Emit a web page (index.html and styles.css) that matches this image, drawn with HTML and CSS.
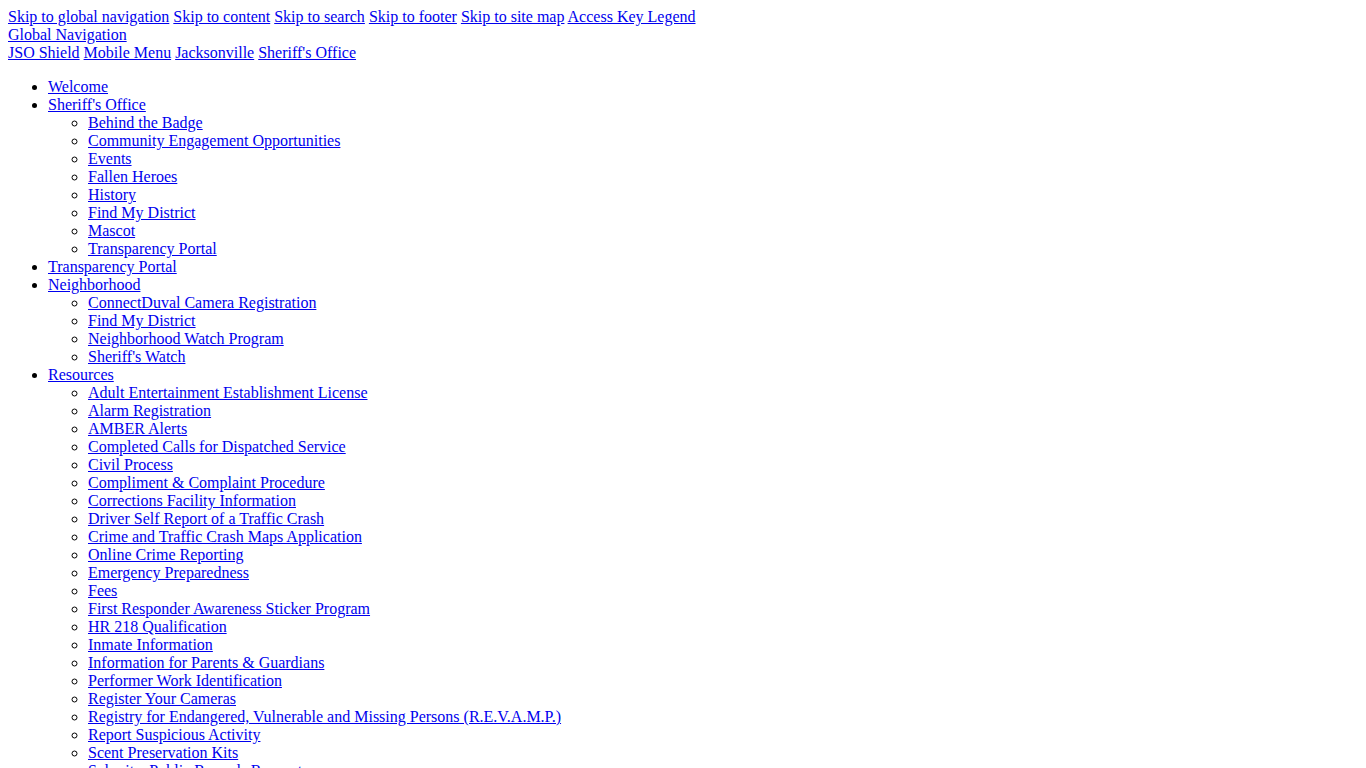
FILE: index.html
```html
<!DOCTYPE html>
<html>
<head>
    <meta charset="UTF-8">
    <title>Jacksonville Sheriff's Office</title>
    <link rel="stylesheet" href="styles.css">
</head>
<body class="page">
<div class="skipLinks">
    <a href="#nav">Skip to global navigation</a>
    <a href="#content">Skip to content</a>
    <a href="#search">Skip to search</a>
    <a href="#footer">Skip to footer</a>
    <a href="#sitemap">Skip to site map</a>
    <a href="#keys">Access Key Legend</a>
</div>
<div class="navTitle"><a href="#nav">Global Navigation</a></div>
<div class="brand">
    <a href="#">JSO Shield</a>
    <a href="#">Mobile Menu</a>
    <a href="#">Jacksonville</a>
    <a href="#">Sheriff's Office</a>
</div>

<ul class="mainNav" id="nav">
    <li><a href="#">Welcome</a></li>
    <li><a href="#">Sheriff's Office</a>
        <ul class="subNav">
            <li><a href="#">Behind the Badge</a></li>
            <li><a href="#">Community Engagement Opportunities</a></li>
            <li><a href="#">Events</a></li>
            <li><a href="#">Fallen Heroes</a></li>
            <li><a href="#">History</a></li>
            <li><a href="#">Find My District</a></li>
            <li><a href="#">Mascot</a></li>
            <li><a href="#">Transparency Portal</a></li>
        </ul>
    </li>
    <li><a href="#">Transparency Portal</a></li>
    <li><a href="#">Neighborhood</a>
        <ul class="subNav">
            <li><a href="#">ConnectDuval Camera Registration</a></li>
            <li><a href="#">Find My District</a></li>
            <li><a href="#">Neighborhood Watch Program</a></li>
            <li><a href="#">Sheriff's Watch</a></li>
        </ul>
    </li>
    <li><a href="#">Resources</a>
        <ul class="subNav">
            <li><a href="#">Adult Entertainment Establishment License</a></li>
            <li><a href="#">Alarm Registration</a></li>
            <li><a href="#">AMBER Alerts</a></li>
            <li><a href="#">Completed Calls for Dispatched Service</a></li>
            <li><a href="#">Civil Process</a></li>
            <li><a href="#">Compliment &amp; Complaint Procedure</a></li>
            <li><a href="#">Corrections Facility Information</a></li>
            <li><a href="#">Driver Self Report of a Traffic Crash</a></li>
            <li><a href="#">Crime and Traffic Crash Maps Application</a></li>
            <li><a href="#">Online Crime Reporting</a></li>
            <li><a href="#">Emergency Preparedness</a></li>
            <li><a href="#">Fees</a></li>
            <li><a href="#">First Responder Awareness Sticker Program</a></li>
            <li><a href="#">HR 218 Qualification</a></li>
            <li><a href="#">Inmate Information</a></li>
            <li><a href="#">Information for Parents &amp; Guardians</a></li>
            <li><a href="#">Performer Work Identification</a></li>
            <li><a href="#">Register Your Cameras</a></li>
            <li><a href="#">Registry for Endangered, Vulnerable and Missing Persons (R.E.V.A.M.P.)</a></li>
            <li><a href="#">Report Suspicious Activity</a></li>
            <li><a href="#">Scent Preservation Kits</a></li>
            <li><a href="#">Submit a Public Records Request</a></li>
            <li><a href="#">Victim Services</a></li>
        </ul>
    </li>
</ul>
</body>
</html>
```

FILE: styles.css
```css
.page {
    margin: 8px;
    font-family: "Liberation Serif", "Times New Roman", serif;
    font-size: 16px;
    color: #000;
    background: #fff;
}

.page a {
    color: #0000ee;
    text-decoration: underline;
}

.mainNav {
    margin: 16px 0;
    padding-left: 40px;
    list-style: disc;
}

.subNav {
    margin: 0;
    padding-left: 40px;
    list-style: circle;
}
```
